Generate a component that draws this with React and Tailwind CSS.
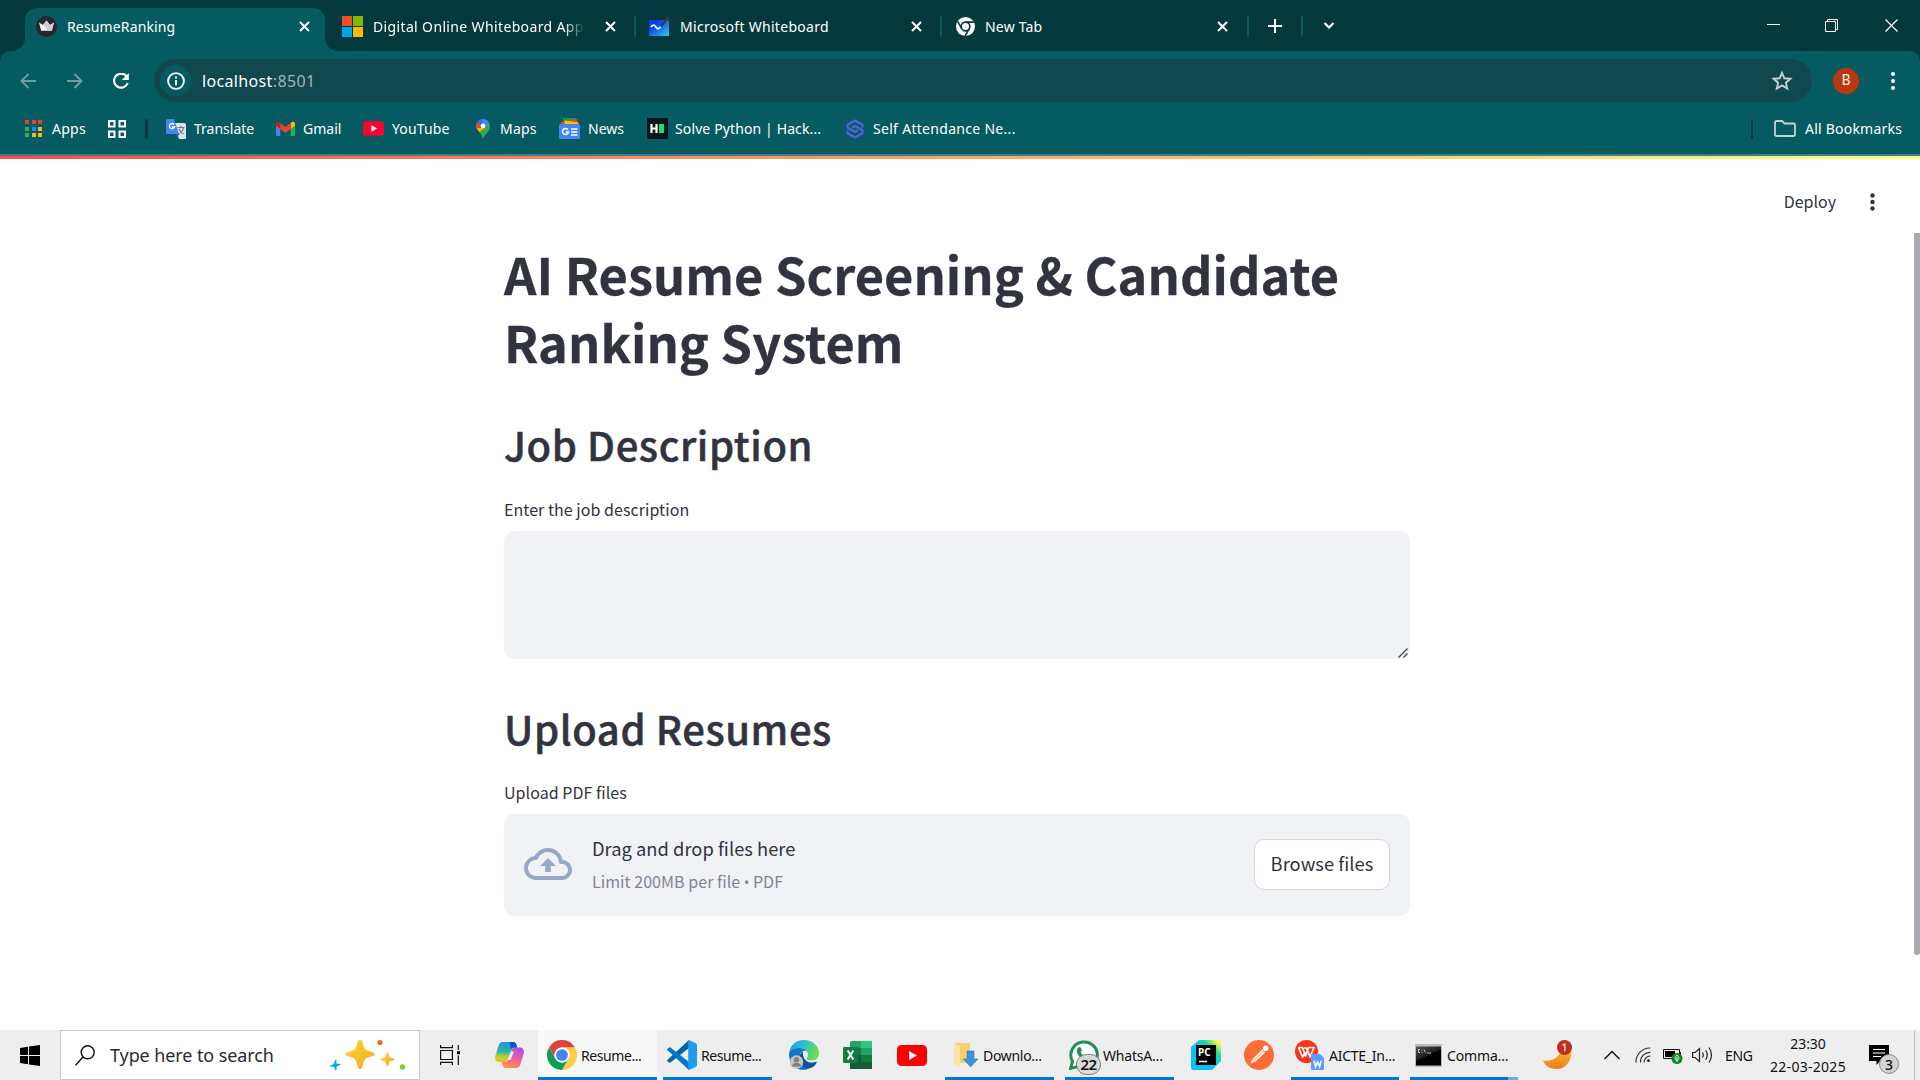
import React from "react";

const UI = "font-['Noto_Sans','Open_Sans',sans-serif]";
const SOURCE = "font-['Noto_Sans_CJK_SC',sans-serif]";

/* ---------- shared glyphs ---------- */

function CloseX({ className = "" }) {
  return (
    <svg className={className} width="11" height="11" viewBox="0 0 11 11" fill="none" stroke="#fff" strokeWidth="2">
      <path d="M1 1l9 9M10 1l-9 9" />
    </svg>
  );
}

function ChromeIcon({ size }) {
  return (
    <svg width={size} height={size} viewBox="0 0 48 48">
      <circle cx="24" cy="24" r="24" fill="#fff" />
      <path d="M3.2 12A24 24 0 0 1 44.8 12H24a12 12 0 0 0-10.4 18Z" fill="#db4437" />
      <path d="M44.8 12A24 24 0 0 1 24 48l10.4-18A12 12 0 0 0 24 12Z" fill="#ffcd40" />
      <path d="M3.2 12A24 24 0 0 0 24 48l10.4-18a12 12 0 0 1-20.8 0Z" fill="#0f9d58" />
      <circle cx="24" cy="24" r="12" fill="#fff" />
      <circle cx="24" cy="24" r="9.4" fill="#4285f4" />
    </svg>
  );
}

function YouTubeIcon({ w, h, color }) {
  return (
    <svg width={w} height={h} viewBox="0 0 30 21">
      <rect width="30" height="21" rx="4.5" fill={color} />
      <path d="M12 6v9l8-4.500z" fill="#fff" />
    </svg>
  );
}

/* ---------- tab icons ---------- */

function CrownIcon() {
  return (
    <svg width="21" height="21" viewBox="0 0 21 21">
      <circle cx="10.500" cy="10.500" r="10.500" fill="#262730" />
      <path d="M3 6.500l4 2.600L10.500 4.500 14 9.100l4-2.600-2.200 8.200H5.200z" fill="#f3f3f3" />
      <path d="M10.500 4.500L14 9.100l4-2.600-2.200 8.200h-3.300L7 9.100z" fill="#cfcfcf" />
    </svg>
  );
}

function MicrosoftIcon() {
  return (
    <svg width="21" height="21" viewBox="0 0 21 21">
      <rect width="10" height="10" fill="#f25022" />
      <rect x="11" width="10" height="10" fill="#7fba00" />
      <rect y="11" width="10" height="10" fill="#00a4ef" />
      <rect x="11" y="11" width="10" height="10" fill="#ffb900" />
    </svg>
  );
}

function WhiteboardIcon() {
  return (
    <svg width="21" height="19" viewBox="0 0 21 19">
      <defs>
        <linearGradient id="wb" x1="0" y1="0" x2="1" y2="1">
          <stop offset="0.300" stopColor="#0a3cf0" />
          <stop offset="1" stopColor="#2fd3e8" />
        </linearGradient>
      </defs>
      <rect y="3" width="20" height="16" rx="1" fill="url(#wb)" />
      <path d="M2 10c1.500-2.500 3.200-2.500 4.500-.5s2.800 3.500 5 .5" stroke="#fff" strokeWidth="1.800" fill="none" />
      <path d="M20 0L12 9" stroke="#3b3a44" strokeWidth="2.600" />
    </svg>
  );
}

function ChromeMono() {
  return (
    <svg width="19" height="19" viewBox="0 0 48 48">
      <circle cx="24" cy="24" r="24" fill="#fff" />
      <g stroke="#03393d" strokeWidth="4" fill="none">
        <circle cx="24" cy="24" r="11" />
        <path d="M24 13h21M14.500 29.500L4 11M33.500 29.500L23 48" />
      </g>
    </svg>
  );
}

/* ---------- browser chrome ---------- */

function TabDivider() {
  return <span className="block h-[21px] w-[2px] shrink-0 rounded-full bg-[#055b61]" />;
}

function Tab({ icon, title, spacing, fade, padding }) {
  return (
    <div className={`flex h-[36px] shrink-0 items-center ${padding}`}>
      {icon}
      <span className={`ml-[10px] block w-[212px] overflow-hidden whitespace-nowrap ${spacing} ${fade ? "[mask-image:linear-gradient(90deg,#000_90%,transparent)]" : ""}`}>
        {title}
      </span>
      <CloseX className="ml-auto" />
    </div>
  );
}

function TabStrip() {
  return (
    <div className="flex h-[51px] bg-[#03393d] pt-[8px] text-[14px] text-white">
      <svg className="mt-[30px] ml-[12px] shrink-0" width="13" height="13" viewBox="0 0 13 13">
        <path d="M13 0v13H0A13 13 0 0 0 13 0Z" fill="#055b61" />
      </svg>
      <div className="h-[43px] w-[300px] shrink-0 rounded-t-[12px] bg-[#055b61]">
        <div className="flex h-[36px] items-center pr-[15px] pl-[11px]">
          <CrownIcon />
          <span className="ml-[10px] tracking-[0.140px]">ResumeRanking</span>
          <CloseX className="ml-auto" />
        </div>
      </div>
      <svg className="mt-[30px] shrink-0" width="13" height="13" viewBox="0 0 13 13">
        <path d="M0 0v13h13A13 13 0 0 1 0 0Z" fill="#055b61" />
      </svg>
      <div className="flex h-[36px] items-center">
        <div className="flex w-[296px] items-center">
          <Tab icon={<MicrosoftIcon />} title="Digital Online Whiteboard App" spacing="tracking-[0.360px]" fade padding="w-[278px] pl-[4px]" />
        </div>
        <TabDivider />
        <Tab icon={<WhiteboardIcon />} title="Microsoft Whiteboard" spacing="tracking-[0.300px]" padding="w-[304px] pl-[13px] pr-[18px]" />
        <TabDivider />
        <Tab icon={<ChromeMono />} title="New Tab" spacing="tracking-[0.200px]" padding="w-[305px] pl-[14px] pr-[19px]" />
        <TabDivider />
        <svg className="mx-[19px]" width="14" height="14" viewBox="0 0 14 14" stroke="#fff" strokeWidth="2">
          <path d="M7 0v14M0 7h14" />
        </svg>
        <TabDivider />
        <svg className="ml-[20px]" width="12" height="8" viewBox="0 0 12 8" fill="none" stroke="#fff" strokeWidth="2.200">
          <path d="M1.500 1L6 5.500 10.500 1" />
        </svg>
      </div>
      <div className="ml-auto flex h-[34px] items-center pr-[22px]">
        <span className="mr-[45px] mb-[2px] block h-px w-[13px] bg-white" />
        <svg className="mr-[47px]" width="13" height="13" viewBox="0 0 13 13" fill="none" stroke="#fff">
          <path d="M.5 2.500h10v10H.5zM2.500 2.500v-2h10v10h-2" />
        </svg>
        <svg width="13" height="13" viewBox="0 0 13 13" fill="none" stroke="#fff" strokeWidth="1.200">
          <path d="M.5.5l12 12M12.500.5l-12 12" />
        </svg>
      </div>
    </div>
  );
}

function Toolbar() {
  return (
    <div className="flex h-[59px] items-center rounded-t-[10px] bg-[#055b61] pl-[20px]">
      <svg width="16" height="16" viewBox="0 0 16 16" fill="none" stroke="#6d9ea1" strokeWidth="1.900">
        <path d="M16 8H1.500M8.500 1L1.500 8l7 7" />
      </svg>
      <svg className="ml-[31px]" width="16" height="16" viewBox="0 0 16 16" fill="none" stroke="#6d9ea1" strokeWidth="1.900">
        <path d="M0 8h14.500M7.500 1l7 7-7 7" />
      </svg>
      <svg className="ml-[30px]" width="16" height="16" viewBox="0 0 16 16">
        <path d="M13.700 3.500A7 7 0 1 0 14.700 10" fill="none" stroke="#fff" strokeWidth="2.200" />
        <path d="M15.800 0v7H8.800z" fill="#fff" />
      </svg>
      <div className="ml-[25px] flex h-[43px] w-[1658px] items-center rounded-full bg-[#10484f] pr-[19px] pl-[6px]">
        <span className="flex size-[31px] items-center justify-center rounded-full bg-[#055b61]">
          <svg width="18" height="18" viewBox="0 0 18 18">
            <circle cx="9" cy="9" r="7.900" fill="none" stroke="#fff" strokeWidth="1.900" />
            <path d="M9 8v5.200M9 4.600v2" stroke="#fff" strokeWidth="1.900" />
          </svg>
        </span>
        <span className="ml-[11px] text-[16px] tracking-[0.350px] text-white">
          localhost<span className="text-[#9fb6b8]">:8501</span>
        </span>
        <svg className="ml-auto" width="22" height="21" viewBox="0 0 22 21" fill="none" stroke="#c7cfd0" strokeWidth="1.900">
          <path d="M11 2.800l2.400 5.500 6 .5-4.500 3.900 1.300 5.800L11 15.400l-5.200 3.100 1.300-5.800-4.500-3.900 6-.5z" />
        </svg>
      </div>
      <span className="ml-[21px] flex size-[26px] items-center justify-center rounded-full bg-[#c0360c] font-['Roboto',sans-serif] text-[14px] text-white">B</span>
      <svg className="ml-[32px]" width="4" height="18" viewBox="0 0 4 18" fill="#fff">
        <circle cx="2" cy="2" r="2" />
        <circle cx="2" cy="9" r="2" />
        <circle cx="2" cy="16" r="2" />
      </svg>
    </div>
  );
}

const APP_DOTS = ["#ea4335", "#ea4335", "#ea4335", "#34a853", "#1a8cff", "#fbbc04", "#34a853", "#fbbc04", "#fbbc04"];

function BookmarksBar() {
  return (
    <div className="flex h-[44px] items-center bg-[#055b61] pb-[7px] pl-[25px] text-[14px] whitespace-nowrap text-white">
      <div className="grid w-[17px] grid-cols-3 gap-[2.500px]">
        {APP_DOTS.map((c, i) => (
          <span key={i} className="h-[4px] w-[4px]" style={{ background: c }} />
        ))}
      </div>
      <span className="ml-[10px] w-[56px] tracking-[0.250px]">Apps</span>
      <svg width="18" height="18" viewBox="0 0 18 18" fill="none" stroke="#fff" strokeWidth="2">
        <path d="M1 1h5.500v5.500H1zM11.500 1H17v5.500h-5.500zM1 11.500h5.500V17H1zM11.500 11.500H17V17h-5.500z" />
      </svg>
      <span className="ml-[19px] h-[20px] w-[3px] rounded-full bg-[#03393d]" />
      <svg className="ml-[18px]" width="20" height="20" viewBox="0 0 20 20">
        <path d="M8 4h10.500a1.500 1.500 0 0 1 1.500 1.500v13a1.500 1.500 0 0 1-1.500 1.500H13z" fill="#dfe3e8" />
        <path d="M1.500 0H8l5 15H1.500A1.500 1.500 0 0 1 0 13.500v-12A1.500 1.500 0 0 1 1.500 0Z" fill="#4285f4" />
        <path d="M9.500 15H13l-1.500 4.500z" fill="#2a56c6" />
        <path d="M8.300 5.700A2.600 2.600 0 1 0 8.500 8H6" fill="none" stroke="#fff" strokeWidth="1.400" />
        <path d="M11.500 8.500h7M15 7v1.500M17.500 8.500c-.5 3-2 5-4.500 6.500M13 10c1 2.500 2.500 4 4.500 5" fill="none" stroke="#6b7a90" strokeWidth="1.200" />
      </svg>
      <span className="ml-[8px] w-[82px]">Translate</span>
      <svg width="19" height="15" viewBox="0 0 19 15">
        <path d="M0 3v10.500A1.500 1.500 0 0 0 1.500 15H4.300V5z" fill="#4285f4" />
        <path d="M19 3v10.500a1.500 1.500 0 0 1-1.500 1.500h-2.800V5z" fill="#34a853" />
        <path d="M0 3a2 2 0 0 1 3.400-1.700L4.300 2v6L0 4.800z" fill="#c5221f" />
        <path d="M19 3a2 2 0 0 0-3.400-1.700L14.700 2v6L19 4.800z" fill="#fbbc04" />
        <path d="M4.300 2l5.200 4 5.200-4v6L9.500 11.900 4.300 8z" fill="#ea4335" />
      </svg>
      <span className="ml-[8px] w-[60px]">Gmail</span>
      <YouTubeIcon w={21} h={17} color="#ff0033" />
      <span className="ml-[8px] w-[84px] tracking-[0.150px]">YouTube</span>
      <svg width="14" height="20" viewBox="0 0 14 20">
        <path d="M7 20c-.8-3-2-4.800-3.700-7L11 3.500 13.500 5c1.200 3 .2 5.600-1.500 7.800C9.500 16 8 17 7 20Z" fill="#34a853" />
        <path d="M3.300 13C1.500 10.700 0 9 0 6.800L4.600 8.800 9 8.700z" fill="#fbbc04" />
        <path d="M1.600 2.500L5.500 6 3 9.400.2 8.500C-.3 6 .2 4 1.600 2.500Z" fill="#ea4335" />
        <path d="M1.600 2.500A7 7 0 0 1 13.500 4.500L9.500 9 5 5.500z" fill="#4285f4" />
        <path d="M1.600 2.500A6.500 6.500 0 0 1 5 .3L7 4.300 5 6z" fill="#1a73e8" />
        <circle cx="7" cy="6.900" r="2.400" fill="#fff" />
      </svg>
      <span className="ml-[10px] w-[59px] tracking-[0.200px]">Maps</span>
      <svg width="21" height="21" viewBox="0 0 21 21">
        <path d="M4 0h13v6H4z" fill="#0c9d58" />
        <path d="M1.500 4L18 1l1.500 7h-17z" fill="#ea4335" />
        <path d="M6 2.500l13.500 2V8H5z" fill="#ffc107" />
        <rect y="6" width="21" height="15" rx="1.500" fill="#4285f4" />
        <path d="M9 11.700a3 3 0 1 0 .5 2.300H6.800" fill="none" stroke="#fff" strokeWidth="1.600" />
        <path d="M12 11h6.500M12 14h6.500M12 17h6.500" stroke="#fff" strokeWidth="1.500" />
      </svg>
      <span className="ml-[8px] w-[59px]">News</span>
      <svg width="21" height="21" viewBox="0 0 21 21">
        <rect width="21" height="21" fill="#0e141e" />
        <path d="M4.500 6v9M9.500 6v9M4.500 10.500h5" stroke="#fff" strokeWidth="2.200" />
        <rect x="12" y="6" width="5" height="9" fill="#1be16a" />
      </svg>
      <span className="ml-[7px] w-[171px] tracking-[0.120px]">Solve Python | Hack...</span>
      <svg width="18" height="20" viewBox="0 0 18 20" fill="none" stroke="#5a5ce6" strokeWidth="2.200" strokeLinejoin="round">
        <path d="M16.500 8.500V5.800L9 1.500 1.500 5.800v3L9 13l3-1.700" />
        <path d="M1.500 11.500v2.700L9 18.500l7.500-4.300v-3L9 7 6 8.700" />
      </svg>
      <span className="ml-[9px] tracking-[0.300px]">Self Attendance Ne...</span>
      <span className="ml-auto h-[20px] w-[2px] rounded-full bg-[#03393d]" />
      <svg className="ml-[21px]" width="22" height="17" viewBox="0 0 22 17" fill="none" stroke="#c7cfd0" strokeWidth="1.800">
        <path d="M1 2.500A1.500 1.500 0 0 1 2.500 1H8l2.500 2.500h9A1.500 1.500 0 0 1 21 5v9.500a1.500 1.500 0 0 1-1.500 1.500h-17A1.500 1.500 0 0 1 1 14.500z" />
      </svg>
      <span className="ml-[9px] w-[115px] tracking-[0.220px]">All Bookmarks</span>
    </div>
  );
}

/* ---------- page ---------- */

const SECTION_TITLE = "h-[60px] text-[40px] leading-[60px] font-medium tracking-[0.590px] [-webkit-text-stroke:0.500px_#31333f]";

function Page() {
  return (
    <main className={`flex h-[871px] justify-end bg-white text-[#31333f] ${SOURCE}`}>
      <div className="flex flex-1 flex-col pl-[504px]">
        <header className="flex h-[80px] items-center justify-end pt-[6px] pr-[39px]">
          <span className="mb-[2px] text-[16px] leading-[24px]">Deploy</span>
          <svg className="ml-[34px]" width="5" height="18" viewBox="0 0 5 18" fill="#31333f">
            <circle cx="2.500" cy="2.500" r="2.200" />
            <circle cx="2.500" cy="9" r="2.200" />
            <circle cx="2.500" cy="15.500" r="2.200" />
          </svg>
        </header>
        <div className="w-[906px]">
          <h1 className="h-[136px] text-[50.500px] leading-[68px] font-bold tracking-[0.060px] [-webkit-text-stroke:0.300px_#31333f]">AI Resume Screening &amp; Candidate Ranking System</h1>
          <h2 className={`mt-[39px] ${SECTION_TITLE}`}>Job Description</h2>
          <p className="mt-[23px] h-[24px] text-[16px] leading-[24px] tracking-[0.050px]">Enter the job description</p>
          <div className="mt-[10px] flex h-[128px] items-end justify-end rounded-[10px] bg-[#f0f2f6] pr-[2px] pb-px">
            <svg width="10" height="10" viewBox="0 0 10 10" stroke="#40414a" strokeWidth="1.200">
              <path d="M0.500 9.500l9-9M5.500 9.500l4-4" />
            </svg>
          </div>
          <h2 className={`mt-[39px] ${SECTION_TITLE}`}>Upload Resumes</h2>
          <p className="mt-[22px] h-[24px] text-[16px] leading-[24px] tracking-[0.050px]">Upload PDF files</p>
          <div className="mt-[10px] flex h-[102px] items-center rounded-[10px] bg-[#f0f2f6] px-[20px]">
            <svg className="mb-[2px]" width="48" height="32" viewBox="0 4 24 16" fill="#98a6c8">
              <path d="M19.350 10.040A7.490 7.490 0 0 0 12 4C9.110 4 6.600 5.640 5.350 8.040A5.994 5.994 0 0 0 0 14c0 3.310 2.690 6 6 6h13c2.760 0 5-2.240 5-5 0-2.640-2.050-4.780-4.650-4.960zM19 18H6c-2.210 0-4-1.790-4-4 0-2.050 1.530-3.760 3.560-3.970l1.070-.11.5-.950A5.469 5.469 0 0 1 12 6c2.620 0 4.880 1.860 5.390 4.430l.3 1.500 1.530.11A2.980 2.980 0 0 1 22 15c0 1.650-1.350 3-3 3zM8 13h2.550v3h2.900v-3H16l-4-4z" />
            </svg>
            <div className="ml-[20px]">
              <p className="text-[18.300px] leading-[34px] tracking-[0.030px]">Drag and drop files here</p>
              <p className="text-[16px] leading-[33px] tracking-[0.050px] text-[#808495]">
                Limit 200MB per file<span className="font-['Noto_Sans',sans-serif] text-[14px]"> • </span>PDF
              </p>
            </div>
            <div className="mb-px ml-auto flex h-[51px] w-[136px] items-center justify-center rounded-[10px] border border-[#d6d7dc] bg-white pb-px text-[18.300px] tracking-[0.050px]">Browse files</div>
          </div>
        </div>
      </div>
      <div className="mt-[74px] h-[722px] w-[6px] rounded-b-[3px] bg-[#a9aab0]" />
    </main>
  );
}

/* ---------- taskbar ---------- */

function Task({ icon, label, width, active, spacing = "tracking-[-0.420px]", pad, gap, tail }) {
  return (
    <div className={`flex h-[50px] shrink-0 flex-col ${width} ${active ? "bg-[#f8f8f8]" : ""}`}>
      <div className={`flex h-[47px] items-center pt-[3px] ${pad}`}>
        {icon}
        <span className={`${gap} ${spacing}`}>{label}</span>
      </div>
      <div className="flex h-[3px] bg-[#0078d7]">{tail && <span className="ml-auto w-[10px] bg-[#62ade8]" />}</div>
    </div>
  );
}

function VSCodeIcon() {
  return (
    <svg width="30" height="30" viewBox="0 0 30 30">
      <path d="M0 20.300L22 0v8L3.500 22.500a1 1 0 0 1-1.300 0L.3 21.200z" fill="#0065a9" />
      <path d="M0 9.700L22 30v-8L3.500 7.500a1 1 0 0 0-1.300 0L.3 8.800z" fill="#007acc" />
      <path d="M22 0l7 3.300a1.800 1.800 0 0 1 1 1.600v20.200a1.800 1.800 0 0 1-1 1.600L22 30a1.500 1.500 0 0 1-.8-1.500v-27A1.500 1.500 0 0 1 22 0Z" fill="#1f9cf0" />
    </svg>
  );
}

function EdgeIcon() {
  return (
    <svg className="ml-[17px]" width="30" height="30" viewBox="0 0 30 30">
      <defs>
        <linearGradient id="edgeTop" x1="0" y1="0" x2="1" y2="0.300">
          <stop offset="0" stopColor="#1c9be0" />
          <stop offset="0.500" stopColor="#2dbfd8" />
          <stop offset="1" stopColor="#67dd4f" />
        </linearGradient>
      </defs>
      <path d="M0 14C1 5 7 0 15 0c9 0 15 6 15 13 0 5-3.500 7.500-8 7.500-3 0-4.500-1-4.500-2 0-.8 1.500-1.500 1.500-4C19 11 15 8 10 8 5 8 1 11 0 14Z" fill="url(#edgeTop)" />
      <path d="M0 14C1 10 5 8 10 8c3 0 6 1 7.500 3-4-1-7 2-7 6.500C10.500 24 15 28 20 28c-1.500 1.300-3 2-5 2C7 30 0 24 0 14Z" fill="#0f76c8" />
      <path d="M10.500 17.500c0-3 1.500-5 3.500-6-1 5 2.500 11 8 11 3 0 4-.8 5-.8.7 0 1 .5.500 1.300C26 26 22.500 28.500 19 28.500c-5 0-8.500-5-8.500-11Z" fill="#14509c" />
      <circle cx="7.500" cy="22" r="6.800" fill="#c3c3c3" />
      <circle cx="7.500" cy="19.800" r="2.700" fill="#808080" />
      <path d="M3 26.500c0-5 9-5 9 0z" fill="#808080" />
    </svg>
  );
}

function ExcelIcon() {
  return (
    <svg className="ml-[24px]" width="29" height="28" viewBox="0 0 29 28">
      <rect x="7" width="22" height="28" rx="1.500" fill="#21a366" />
      <rect x="18" width="11" height="7" fill="#33c481" />
      <rect x="7" y="7" width="11" height="7" fill="#107c41" />
      <rect x="7" y="14" width="11" height="14" fill="#185c37" />
      <rect x="18" y="14" width="11" height="7" fill="#107c41" />
      <rect x="18" y="21" width="11" height="7" fill="#185c37" />
      <rect y="6" width="15" height="16" rx="1.200" fill="#107c41" />
      <path d="M4.700 9.500l5.600 9M10.300 9.500l-5.600 9" stroke="#fff" strokeWidth="2" />
    </svg>
  );
}

function DownloadsIcon() {
  return (
    <svg width="24" height="26" viewBox="0 0 24 26">
      <path d="M0 1h16v20H5z" fill="#f6d06f" />
      <path d="M0 1l6 3v22l-6-4z" fill="#fbe6a4" />
      <path d="M13 9h7v8h4l-7.500 8L9.500 17H13z" fill="#3b93dd" stroke="#2a78bd" strokeWidth="0.600" />
    </svg>
  );
}

function WhatsAppIcon() {
  return (
    <span className="relative">
      <svg width="30" height="30" viewBox="0 0 30 30">
        <path d="M1.600 28.400l1.900-7A13.200 13.200 0 1 1 8.600 26.600z" fill="#fff" stroke="#1d8f57" strokeWidth="3" />
        <path d="M9.500 7.500c1-.8 2-.5 2.300.3l1 2.500c.2.700-1.200 1.700-1 2.300 1 2 3 4 5.200 4.800.6.200 1.700-1.700 2.400-1.400l2.700 1.300c.7.400.3 2-.5 2.900-1.800 1.800-4.800 1-7.700-.7-3-1.900-5.500-5-6-7.500-.3-1.800.4-3.500 1.600-4.500Z" fill="#1d8f57" />
      </svg>
      <span className="absolute top-[14px] left-[7px] flex h-[21px] w-[25px] items-center justify-center rounded-full border border-[#777] bg-[#d9dad9]/95 text-[15px] font-semibold tracking-[-0.600px]">22</span>
    </span>
  );
}

function PyCharmIcon() {
  return (
    <span className="relative ml-[17px] flex">
      <svg width="30" height="30" viewBox="0 0 30 30">
        <defs>
          <linearGradient id="pcg" x1="0.200" y1="0.800" x2="0.950" y2="0.050">
            <stop offset="0.350" stopColor="#07c3f2" />
            <stop offset="0.680" stopColor="#21d7a0" />
            <stop offset="0.950" stopColor="#fcf84a" />
          </linearGradient>
        </defs>
        <path d="M8 0h20a2 2 0 0 1 2 2v19l-9 9H2a2 2 0 0 1-2-2V7z" fill="url(#pcg)" />
        <rect x="5" y="5" width="20" height="20" fill="#000" />
        <path d="M8 21.500h8" stroke="#fff" strokeWidth="1.500" />
      </svg>
      <span className="absolute top-[6px] left-[7px] text-[10px] leading-[12px] font-bold text-white">PC</span>
    </span>
  );
}

function PostmanIcon() {
  return (
    <svg className="ml-[23px]" width="30" height="30" viewBox="0 0 30 30">
      <circle cx="15" cy="15" r="15" fill="#ff6c37" />
      <path d="M6.500 23.500l2-4L18 9.500l3 3-9.500 9z" fill="#fff" />
      <path d="M9 21.500L19.500 11" stroke="#ff6c37" strokeWidth="0.800" />
      <circle cx="21.700" cy="8.300" r="2.800" fill="#fff" />
    </svg>
  );
}

function WpsIcon() {
  return (
    <svg width="30" height="30" viewBox="0 0 30 30">
      <circle cx="11.500" cy="11.500" r="11.500" fill="#f9351b" />
      <path d="M3.500 7.500h4l3 8.500 3-8.500h5.500L15 17l-3.500-9H9M3.500 7.500L7.500 17l3-5" fill="none" stroke="#fff" strokeWidth="1.700" strokeLinejoin="round" />
      <path d="M16 14h9l4 4v10.500a1.500 1.500 0 0 1-1.500 1.500h-10a1.500 1.500 0 0 1-1.500-1.500z" fill="#5a9bff" />
      <path d="M19 20.500l1.600 6 2-4.500 2 4.500 1.600-6" fill="none" stroke="#fff" strokeWidth="1.600" />
    </svg>
  );
}

function CmdIcon() {
  return (
    <svg width="27" height="23" viewBox="0 0 27 23">
      <defs>
        <linearGradient id="cmdg" x1="0" y1="0" x2="0.600" y2="1">
          <stop offset="0" stopColor="#555" />
          <stop offset="0.550" stopColor="#1c1c1c" />
          <stop offset="0.560" stopColor="#000" />
        </linearGradient>
      </defs>
      <rect width="27" height="23" fill="#b9bec4" />
      <rect x="1" y="2.500" width="25" height="19" fill="url(#cmdg)" />
      <path d="M5 5.500H3.500v3H5M7 6v.8M7 8v.8M9 5.500l1.500 3M12 9h4" fill="none" stroke="#ddd" strokeWidth="0.800" />
    </svg>
  );
}

function Sparkles() {
  return (
    <svg className="ml-auto" width="76" height="34" viewBox="0 0 76 34">
      <defs>
        <linearGradient id="sp" x1="0" y1="0" x2="1" y2="1">
          <stop offset="0" stopColor="#ffd83b" />
          <stop offset="1" stopColor="#f0a91c" />
        </linearGradient>
      </defs>
      <path d="M30 1.500c1.500 0 2.200 1.500 3 4.500 1.300 5 2 6 6.500 7.300 3 .9 5 1.500 5 2.900s-2 2-5 2.900c-4.500 1.300-5.200 2.300-6.500 7.300-.8 3-1.500 4.500-3 4.500s-2.200-1.500-3-4.500c-1.300-5-2-6-6.500-7.300-3-.9-5-1.500-5-2.900s2-2 5-2.900c4.500-1.300 5.200-2.300 6.500-7.300.8-3 1.500-4.500 3-4.500Z" fill="url(#sp)" />
      <path d="M57.500 14c1 0 1.500 4.500 2.300 5.200.8.700 4.700 1.300 4.700 2.300s-3.900 1.500-4.700 2.300c-.8.800-1.300 4.700-2.300 4.700s-1.500-3.900-2.300-4.700c-.8-.8-4.700-1.300-4.700-2.300s3.900-1.600 4.700-2.300c.8-.7 1.300-5.200 2.300-5.200Z" fill="url(#sp)" />
      <path d="M6 21.500c1 .3 0 3.500.7 4 .7.600 4 0 4 .9s-3.300 1.400-3.900 2.100c-.6.800.2 4-.9 4-1 0-1.200-3.200-1.800-3.700-.7-.5-4 .4-4.100-.6 0-.9 3-1.500 3.700-2.200.7-.8 1.400-4.700 2.300-4.500Z" fill="#00a8f0" />
      <circle cx="50" cy="4.500" r="2.600" fill="#f26522" />
      <circle cx="72.500" cy="29" r="2.700" fill="#8cc63f" />
    </svg>
  );
}

function CopilotIcon() {
  return (
    <svg className="ml-[16px]" width="29" height="26" viewBox="0 0 29 26">
      <defs>
        <linearGradient id="cpA" x1="0.300" y1="0" x2="0.200" y2="1">
          <stop offset="0" stopColor="#1794e8" />
          <stop offset="0.450" stopColor="#2bb5a0" />
          <stop offset="0.750" stopColor="#b9d531" />
          <stop offset="1" stopColor="#f7b51b" />
        </linearGradient>
        <linearGradient id="cpB" x1="0.800" y1="0" x2="0.500" y2="1">
          <stop offset="0" stopColor="#a24ff0" />
          <stop offset="0.500" stopColor="#ee5a9c" />
          <stop offset="1" stopColor="#fb8f4f" />
        </linearGradient>
      </defs>
      <path d="M8 0h10c2.300 0 3 1.500 3.700 3.500l.5 2H19c-1.500 0-2.500 1-3 2.500l-3 8.500c-.8 2.300-1.700 3.500-4 3.500H4c-3 0-4.500-2.500-3.700-6L3.500 4C4.200 1.500 5.500 0 8 0Z" fill="url(#cpA)" />
      <path d="M21 26H11c-2.300 0-3-1.500-3.700-3.500l-.5-2.500H10c1.500 0 2.500-1 3-2.500l3-8.500c.8-2.300 1.700-3.500 4-3.500h5c3 0 4.500 2.500 3.700 6L25.500 22c-.7 2.500-2 4-4.500 4Z" fill="url(#cpB)" />
      <path d="M18 0c2.300 0 3 1.500 3.700 3.500l.5 2H19c-1.500 0-2.500 1-3 2.500L14.500 0z" fill="#1450c8" />
      <path d="M16 9.500h3l-3.500 8.500h-3z" fill="#f1ecf4" />
    </svg>
  );
}

function Tray() {
  return (
    <div className="ml-auto flex h-[50px] items-center">
      <svg width="30" height="31" viewBox="0 0 30 31">
        <defs>
          <linearGradient id="moon" x1="0" y1="0" x2="0" y2="1">
            <stop offset="0" stopColor="#f7bd31" />
            <stop offset="1" stopColor="#ee7a1b" />
          </linearGradient>
        </defs>
        <path d="M0 20.500C8 22 17 18 18.500 8L28 9c1.500 11-5 20-14 20C7 29 2 25.500 0 20.500Z" fill="url(#moon)" />
        <circle cx="21.500" cy="7.500" r="7.500" fill="#c42b1c" />
        <path d="M19.500 5.300l2.300-1.300v7.200" fill="none" stroke="#fff" strokeWidth="1.300" />
      </svg>
      <svg className="ml-[31px]" width="16" height="10" viewBox="0 0 16 10" fill="none" stroke="#111" strokeWidth="1.400">
        <path d="M.5 9L8 1.500 15.500 9" />
      </svg>
      <svg className="ml-[15px]" width="16" height="16" viewBox="0 0 16 16" fill="none" stroke="#333" strokeWidth="1.200">
        <circle cx="13.500" cy="13.700" r="1.400" fill="#111" stroke="none" />
        <path d="M9.200 15.500A6 6 0 0 1 15.500 9M5.500 15.500A9.500 9.500 0 0 1 15.500 5.300M1 15.500A14 14 0 0 1 15.500 1" />
      </svg>
      <svg className="ml-[12px] mt-[2px]" width="20" height="16" viewBox="0 0 20 16">
        <path d="M.5 1.500h16v9H.5zM17.500 4v4" fill="none" stroke="#111" />
        <path d="M2 3h10v6H2z" fill="#000" />
        <circle cx="14" cy="10.500" r="5.500" fill="#0f8a1f" />
        <path d="M14 7c2.500 2 2.500 5 0 5.500-2.500-.5-2.500-3.500 0-5.500ZM14 9v5" fill="none" stroke="#fff" strokeWidth="0.900" />
      </svg>
      <svg className="ml-[9px]" width="21" height="18" viewBox="0 0 21 18" fill="none" stroke="#222" strokeWidth="1.200">
        <path d="M.6 6.500h2.500L7.500 2.500v13L3.100 11.500H.6zM10.500 6.500q1.500 2.500 0 5M13.700 4.300q3 4.700 0 9.400M17 1.500q5 7.500 0 15" />
      </svg>
      <span className="ml-[12px] w-[29px] tracking-[-0.300px]">ENG</span>
      <div className="ml-[16px] flex w-[76px] flex-col items-center leading-[23px]">
        <span className="tracking-[-0.100px]">23:30</span>
        <span className="tracking-[0.280px]">22-03-2025</span>
      </div>
      <span className="relative ml-[23px] h-[20px] w-[20px]">
        <svg width="20" height="20" viewBox="0 0 20 20">
          <path d="M0 0h20v16h-9l-3.500 4v-4H0z" fill="#000" />
          <path d="M4 4.500h12M4 8h12M4 11.500h8" stroke="#fff" strokeWidth="1.200" />
        </svg>
        <span className="absolute top-[9px] left-[10px] flex size-[20px] items-center justify-center rounded-full border border-[#888] bg-[#d3d3d3] text-[14px] font-medium">3</span>
      </span>
      <span className="ml-[25px] h-[50px] w-[6px] border-l border-[#c4c4c4]" />
    </div>
  );
}

function Taskbar() {
  return (
    <footer className="flex h-[50px] items-center bg-[#eeeeee] text-[14px] whitespace-nowrap text-[#111]">
      <svg className="ml-[20px]" width="20" height="21" viewBox="0 0 20 21">
        <path d="M0 3l8-1.200V10H0zM9 1.600L20 0v10H9zM0 11h8v8.200L0 18zM9 11h11v10L9 19.400z" fill="#000" />
      </svg>
      <div className="ml-[20px] flex h-[50px] w-[360px] items-center border border-[#cccccc] bg-white pr-[13px] pl-[14px]">
        <svg width="20" height="21" viewBox="0 0 20 21" fill="none" stroke="#111" strokeWidth="1.400">
          <circle cx="12.700" cy="7.300" r="6.500" />
          <path d="M8 12L.6 20.300" />
        </svg>
        <span className="ml-[15px] text-[18px] tracking-[-0.100px] text-[#2b2b2b]">Type here to search</span>
        <Sparkles />
      </div>
      <svg className="ml-[20px]" width="20" height="20" viewBox="0 0 20 20" fill="none" stroke="#111" strokeWidth="1.200">
        <path d="M.6 5.500h11.800v9H.6zM.6 0v2.700h11.800V0M.6 20v-2.700h11.800V20M18.300 0v5M18.300 10.500V20" />
        <rect x="17" y="6.200" width="3" height="3" fill="#000" stroke="none" />
      </svg>
      <div className="w-[78px] pl-[19px]">
        <CopilotIcon />
      </div>
      <Task icon={<ChromeIcon size={30} />} label="Resume..." width="w-[119px]" pad="pl-[9px]" gap="ml-[4px]" active />
      <span className="w-[6px]" />
      <Task icon={<VSCodeIcon />} label="Resume..." width="w-[109px]" pad="pl-[4px]" gap="ml-[4px]" />
      <EdgeIcon />
      <ExcelIcon />
      <span className="ml-[25px]">
        <YouTubeIcon w={30} h={21} color="#ff0000" />
      </span>
      <span className="w-[18px]" />
      <Task icon={<DownloadsIcon />} label="Downlo..." width="w-[109px]" spacing="tracking-[-0.300px]" pad="pl-[9px]" gap="ml-[5px]" />
      <span className="w-[11px]" />
      <Task icon={<WhatsAppIcon />} label="WhatsA..." width="w-[109px]" spacing="tracking-[-0.200px]" pad="pl-[4px]" gap="ml-[4px]" />
      <PyCharmIcon />
      <PostmanIcon />
      <span className="w-[17px]" />
      <Task icon={<WpsIcon />} label="AICTE_In..." width="w-[108px]" spacing="tracking-[-0.250px]" pad="pl-[4px]" gap="ml-[4px]" />
      <span className="w-[11px]" />
      <Task icon={<CmdIcon />} label="Comma..." width="w-[108px]" spacing="tracking-[-0.150px]" pad="pl-[5px]" gap="ml-[5px]" tail />
      <Tray />
    </footer>
  );
}

export default function App() {
  return (
    <div className={`flex h-[1080px] w-[1920px] flex-col overflow-hidden bg-white ${UI}`}>
      <TabStrip />
      <div className="bg-[#03393d]">
        <Toolbar />
      </div>
      <BookmarksBar />
      <div className="h-[2px] bg-[#3f7f84]" />
      <div className="h-[3px] bg-[linear-gradient(90deg,#ff4b4b,#fffd80)]" />
      <Page />
      <Taskbar />
    </div>
  );
}
